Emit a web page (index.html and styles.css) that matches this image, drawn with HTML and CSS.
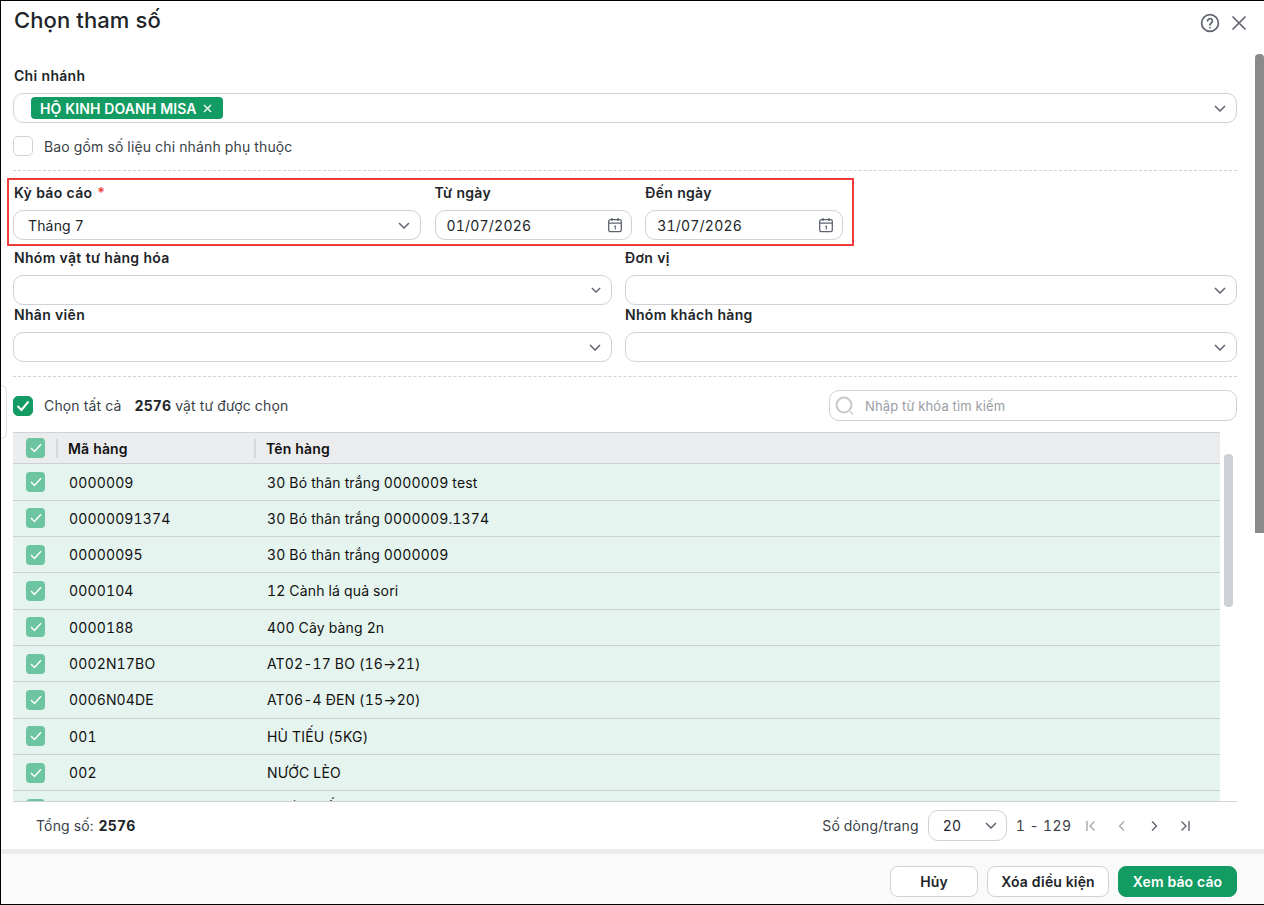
FILE: index.html
```html
<!DOCTYPE html>
<html lang="vi">

<head>
    <meta charset="UTF-8">
    <meta name="viewport" content="width=device-width, initial-scale=1.0">
    <title>Chọn tham số</title>

    <link rel="stylesheet" href="styles.css">
</head>

<body>

    <div class="dialog">
        <span class="side-tab"></span>
        <span class="page-scroll"></span>

        <div class="head">
            <h1 class="title">Chọn tham số</h1>
            <div class="head-icons">
                <svg width="20" height="20" viewBox="0 0 20 20" fill="none" stroke="#5f6470" stroke-width="1.7" stroke-linecap="round">
                    <circle cx="10" cy="10" r="8.4" />
                    <path d="M7.6 8a2.4 2.4 0 1 1 3.7 2c-.9.6-1.3 1-1.3 2" />
                    <path d="M10 14.6v.1" />
                </svg>
                <svg width="16" height="16" viewBox="0 0 16 16" fill="none" stroke="#5f6470" stroke-width="1.7" stroke-linecap="round">
                    <path d="M2 2l12 12M14 2L2 14" />
                </svg>
            </div>
        </div>

        <div class="form">
            <div class="label first-label branch-label">Chi nhánh</div>
            <div class="field tag-field">
                <span class="tag">HỘ KINH DOANH MISA
                    <svg width="9" height="9" viewBox="0 0 9 9" fill="none" stroke="#fff" stroke-width="1.3"><path d="M1 1l7 7M8 1L1 8" /></svg>
                </span>
                <svg class="chev" width="12" height="7" viewBox="0 0 12 7" fill="none" stroke="#5f6470" stroke-width="1.5"><path d="M1 1l5 5 5-5" /></svg>
            </div>

            <label class="check-row dep-row">
                <span class="box"></span>
                <span>Bao gồm số liệu chi nhánh phụ thuộc</span>
            </label>

            <div class="dash first-dash"></div>

            <div class="period">
                <div class="col-period">
                    <div class="label first-label">Kỳ báo cáo <span class="req">*</span></div>
                    <div class="field">
                        <span class="val val-period">Tháng 7</span>
                        <svg class="chev" width="12" height="7" viewBox="0 0 12 7" fill="none" stroke="#5f6470" stroke-width="1.5"><path d="M1 1l5 5 5-5" /></svg>
                    </div>
                </div>
                <div class="col-date">
                    <div class="label">Từ ngày</div>
                    <div class="field">
                        <span class="val date">01/07/2026</span>
                        <svg class="cal" width="16" height="16" viewBox="0 0 16 16" fill="none" stroke="#5f6470" stroke-width="1.3"><rect x="1.7" y="2.7" width="12.6" height="12" rx="1.6" /><path d="M1.7 6.2h12.6M5 1v3M11 1v3" /><path d="M7.3 9.4L8.3 9v3.4" stroke-width="1.1" /></svg>
                    </div>
                </div>
                <div class="col-date">
                    <div class="label">Đến ngày</div>
                    <div class="field">
                        <span class="val date">31/07/2026</span>
                        <svg class="cal" width="16" height="16" viewBox="0 0 16 16" fill="none" stroke="#5f6470" stroke-width="1.3"><rect x="1.7" y="2.7" width="12.6" height="12" rx="1.6" /><path d="M1.7 6.2h12.6M5 1v3M11 1v3" /><path d="M7.3 9.4L8.3 9v3.4" stroke-width="1.1" /></svg>
                    </div>
                </div>
            </div>

            <div class="two-cols">
                <div>
                    <div class="label first-label">Nhóm vật tư hàng hóa</div>
                    <div class="field"><svg class="chev" width="10" height="6" viewBox="0 0 12 7" fill="none" stroke="#5f6470" stroke-width="1.6"><path d="M1 1l5 5 5-5" /></svg></div>
                </div>
                <div>
                    <div class="label">Đơn vị</div>
                    <div class="field"><svg class="chev" width="12" height="7" viewBox="0 0 12 7" fill="none" stroke="#5f6470" stroke-width="1.5"><path d="M1 1l5 5 5-5" /></svg></div>
                </div>
                <div>
                    <div class="label first-label">Nhân viên</div>
                    <div class="field"><svg class="chev" width="12" height="7" viewBox="0 0 12 7" fill="none" stroke="#5f6470" stroke-width="1.5"><path d="M1 1l5 5 5-5" /></svg></div>
                </div>
                <div>
                    <div class="label">Nhóm khách hàng</div>
                    <div class="field"><svg class="chev" width="12" height="7" viewBox="0 0 12 7" fill="none" stroke="#5f6470" stroke-width="1.5"><path d="M1 1l5 5 5-5" /></svg></div>
                </div>
            </div>

            <div class="dash second-dash"></div>

            <div class="select-bar">
                <label class="check-row">
                    <span class="box on"><svg width="14" height="12" viewBox="0 0 14 12" fill="none" stroke="#fff" stroke-width="2"><path d="M1.5 6l4 4 7-8.5" /></svg></span>
                    <span>Chọn tất cả</span>
                </label>
                <div class="picked"><b>2576</b> vật tư được chọn</div>
                <div class="search">
                    <svg width="20" height="20" viewBox="0 0 20 20" fill="none" stroke="#c9c9c9" stroke-width="2"><circle cx="9" cy="9" r="7.4" /><path d="M15 15.5l3 3" stroke-width="1.2" /></svg>
                    <span>Nhập từ khóa tìm kiếm</span>
                </div>
            </div>

            <div class="table-wrap">
                <div class="table">
                    <div class="row thead">
                        <span class="cell-check"><span class="mini"><svg width="12" height="10" viewBox="0 0 12 10" fill="none" stroke="#fff" stroke-width="1.5"><path d="M1 5l3.5 3.5L11 1.2" /></svg></span></span>
                        <span class="cell-code">Mã hàng</span>
                        <span class="cell-name">Tên hàng</span>
                    </div>
                    <div class="row">
                        <span class="cell-check"><span class="mini"><svg width="12" height="10" viewBox="0 0 12 10" fill="none" stroke="#fff" stroke-width="1.5"><path d="M1 5l3.5 3.5L11 1.2" /></svg></span></span>
                        <span class="cell-code">0000009</span>
                        <span class="cell-name">30 Bó thân trắng 0000009 test</span>
                    </div>
                    <div class="row">
                        <span class="cell-check"><span class="mini"><svg width="12" height="10" viewBox="0 0 12 10" fill="none" stroke="#fff" stroke-width="1.5"><path d="M1 5l3.5 3.5L11 1.2" /></svg></span></span>
                        <span class="cell-code">00000091374</span>
                        <span class="cell-name">30 Bó thân trắng 0000009.1374</span>
                    </div>
                    <div class="row">
                        <span class="cell-check"><span class="mini"><svg width="12" height="10" viewBox="0 0 12 10" fill="none" stroke="#fff" stroke-width="1.5"><path d="M1 5l3.5 3.5L11 1.2" /></svg></span></span>
                        <span class="cell-code">00000095</span>
                        <span class="cell-name">30 Bó thân trắng 0000009</span>
                    </div>
                    <div class="row">
                        <span class="cell-check"><span class="mini"><svg width="12" height="10" viewBox="0 0 12 10" fill="none" stroke="#fff" stroke-width="1.5"><path d="M1 5l3.5 3.5L11 1.2" /></svg></span></span>
                        <span class="cell-code">0000104</span>
                        <span class="cell-name">12 Cành lá quả sori</span>
                    </div>
                    <div class="row">
                        <span class="cell-check"><span class="mini"><svg width="12" height="10" viewBox="0 0 12 10" fill="none" stroke="#fff" stroke-width="1.5"><path d="M1 5l3.5 3.5L11 1.2" /></svg></span></span>
                        <span class="cell-code">0000188</span>
                        <span class="cell-name">400 Cây bàng 2n</span>
                    </div>
                    <div class="row">
                        <span class="cell-check"><span class="mini"><svg width="12" height="10" viewBox="0 0 12 10" fill="none" stroke="#fff" stroke-width="1.5"><path d="M1 5l3.5 3.5L11 1.2" /></svg></span></span>
                        <span class="cell-code">0002N17BO</span>
                        <span class="cell-name">AT02-17 BO (16→21)</span>
                    </div>
                    <div class="row">
                        <span class="cell-check"><span class="mini"><svg width="12" height="10" viewBox="0 0 12 10" fill="none" stroke="#fff" stroke-width="1.5"><path d="M1 5l3.5 3.5L11 1.2" /></svg></span></span>
                        <span class="cell-code">0006N04DE</span>
                        <span class="cell-name">AT06-4 ĐEN (15→20)</span>
                    </div>
                    <div class="row">
                        <span class="cell-check"><span class="mini"><svg width="12" height="10" viewBox="0 0 12 10" fill="none" stroke="#fff" stroke-width="1.5"><path d="M1 5l3.5 3.5L11 1.2" /></svg></span></span>
                        <span class="cell-code">001</span>
                        <span class="cell-name">HÙ TIẾU (5KG)</span>
                    </div>
                    <div class="row">
                        <span class="cell-check"><span class="mini"><svg width="12" height="10" viewBox="0 0 12 10" fill="none" stroke="#fff" stroke-width="1.5"><path d="M1 5l3.5 3.5L11 1.2" /></svg></span></span>
                        <span class="cell-code">002</span>
                        <span class="cell-name">NƯỚC LÈO</span>
                    </div>
                    <div class="row">
                        <span class="cell-check"><span class="mini"><svg width="12" height="10" viewBox="0 0 12 10" fill="none" stroke="#fff" stroke-width="1.5"><path d="M1 5l3.5 3.5L11 1.2" /></svg></span></span>
                        <span class="cell-code">003</span>
                        <span class="cell-name">NƯỚC TIẾT</span>
                    </div>
                </div>
                <span class="table-scroll"></span>
            </div>

            <div class="pager">
                <div>Tổng số: <b>2576</b></div>
                <div class="pager-right">
                    <span>Số dòng/trang</span>
                    <span class="size-select">20
                        <svg width="12" height="7" viewBox="0 0 12 7" fill="none" stroke="#5f6470" stroke-width="1.5"><path d="M1 1l5 5 5-5" /></svg>
                    </span>
                    <span class="range">1 - 129</span>
                    <span class="pages">
                        <svg width="12" height="12" viewBox="0 0 12 12" fill="none" stroke="#a5a8b0" stroke-width="1.4"><path d="M2 1v10M9.5 1.5L5 6l4.5 4.5" /></svg>
                        <svg width="12" height="12" viewBox="0 0 12 12" fill="none" stroke="#a5a8b0" stroke-width="1.4"><path d="M8 1.5L3.5 6 8 10.5" /></svg>
                        <svg width="12" height="12" viewBox="0 0 12 12" fill="none" stroke="#5f6470" stroke-width="1.4"><path d="M4 1.5L8.500 6 4 10.5" /></svg>
                        <svg width="12" height="12" viewBox="0 0 12 12" fill="none" stroke="#5f6470" stroke-width="1.4"><path d="M10 1v10M2.500 1.500L7 6l-4.500 4.500" /></svg>
                    </span>
                </div>
            </div>
        </div>

        <div class="foot">
            <button class="btn btn-cancel">Hủy</button>
            <button class="btn btn-clear">Xóa điều kiện</button>
            <button class="btn btn-main">Xem báo cáo</button>
        </div>
    </div>

</body>

</html>
```

FILE: styles.css
```css
* {
    box-sizing: border-box;
}

body {
    margin: 0;
    font-family: Inter, "Noto Sans", sans-serif;
    font-size: 14px;
    letter-spacing: 0.15px;
    font-variant-numeric: tabular-nums;
    color: #212529;
    background: #fff;
}

.dialog {
    position: relative;
    width: 1264px;
    height: 905px;
    border: 1px solid #000;
    border-right: 0;
    background: #fff;
    overflow: hidden;
    display: flex;
    flex-direction: column;
}

.side-tab {
    position: absolute;
    left: -1px;
    top: 384px;
    width: 7px;
    height: 54px;
    border: 1px solid #dcdde1;
    border-left: 0;
    border-radius: 0 6px 6px 0;
}

.page-scroll {
    position: absolute;
    right: 0;
    top: 53px;
    width: 9px;
    height: 479px;
    background: #8a8a8a;
    border-radius: 4px 4px 0 0;
}

.head {
    height: 39px;
    padding: 5px 17px 0 13px;
    display: flex;
    justify-content: space-between;
}

.title {
    margin: 0;
    font-size: 22px;
    line-height: 28px;
    font-weight: 500;
    letter-spacing: 0.1px;
}

.head-icons {
    display: flex;
    align-items: center;
    gap: 11px;
    height: 32px;
    margin-top: 1px;
}

.form {
    flex: 1;
    padding: 0 27px 0 12px;
}

.label {
    font-weight: 600;
    font-size: 14px;
    line-height: 20px;
    height: 20px;
    letter-spacing: 0.3px;
}

.first-label {
    padding-left: 1px;
}

.branch-label {
    margin-top: 27px;
}

.req {
    color: #ef3d3d;
}

.field {
    height: 30px;
    border: 1px solid #d0d2d8;
    border-radius: 10px;
    display: flex;
    align-items: center;
    justify-content: space-between;
    background: #fff;
    margin-top: 7px;
}

.chev {
    margin-left: auto;
    margin-right: 10px;
}

.tag-field {
    margin-top: 7px;
    padding-left: 17px;
}

.tag {
    display: inline-flex;
    align-items: center;
    gap: 6px;
    height: 22px;
    padding: 0 11px 0 9px;
    border-radius: 4px;
    background: #129b62;
    color: #fff;
    font-weight: 600;
    font-size: 14px;
    letter-spacing: 0.1px;
}

.check-row {
    display: flex;
    align-items: center;
    gap: 11px;
    color: #3a3f47;
}

.dep-row {
    margin-top: 13px;
}

.box {
    width: 20px;
    height: 20px;
    border: 1px solid #d0d2d8;
    border-radius: 5px;
    display: flex;
    align-items: center;
    justify-content: center;
}

.box.on {
    background: #129b62;
    border-color: #129b62;
}

.dash {
    border-top: 1px dashed #d0d2d8;
}

.first-dash {
    margin-top: 14px;
}

.period {
    display: flex;
    gap: 13px;
    width: 847px;
    height: 68px;
    margin: 7px 0 0 -6px;
    padding: 3px 9px 0 4px;
    border: 2px solid #ef3d3d;
}

.col-period {
    width: 408px;
    margin-right: 1px;
}

.col-date {
    width: 198px;
}

.period .field {
    margin-top: 7px;
}

.val {
    padding-left: 14px;
}

.val-period {
    font-size: 14px;
}

.date {
    padding-left: 11px;
    letter-spacing: 0.2px;
}

.cal {
    margin-right: 8px;
}

.two-cols {
    display: grid;
    grid-template-columns: 599px 612px;
    column-gap: 13px;
    margin-top: 2px;
}

.second-dash {
    margin-top: 14px;
}

.select-bar {
    display: flex;
    align-items: center;
    height: 31px;
    margin-top: 13px;
}

.picked {
    margin-left: 13px;
    color: #3a3f47;
}

.picked b {
    color: #212529;
    font-weight: 700;
}

.search {
    margin-left: auto;
    width: 408px;
    height: 31px;
    border: 1px solid #d0d2d8;
    border-radius: 10px;
    display: flex;
    align-items: center;
    gap: 10px;
    padding-left: 5px;
    color: #9a9da4;
    font-size: 13px;
}

.table-wrap {
    display: flex;
    height: 370px;
    margin-top: 11px;
    border-bottom: 1px solid #d0d2d8;
    overflow: hidden;
    position: relative;
}

.table {
    width: 1207px;
}

.table-scroll {
    position: absolute;
    left: 1211px;
    top: 22px;
    width: 9px;
    height: 153px;
    background: #cdd0d5;
    border-radius: 4px;
}

.row {
    display: flex;
    align-items: center;
    height: 36.33px;
    background: #e5f4ef;
    border-bottom: 1px solid #ccd0d6;
    color: #111;
}

.thead {
    height: 32.2px;
    background: #ebecee;
    border-top: 1px solid #d0d2d8;
    font-weight: 600;
}

.cell-check {
    width: 43px;
    padding-left: 13px;
    display: flex;
}

.mini {
    width: 19px;
    height: 20px;
    border-radius: 4px;
    background: #6cc4a1;
    display: flex;
    align-items: center;
    justify-content: center;
}

.cell-code {
    width: 198px;
    padding-left: 13px;
}

.cell-name {
    flex: 1;
    padding-left: 13px;
}

.thead .cell-code,
.thead .cell-name {
    border-left: 2px solid #d5d7db;
    line-height: 19px;
    padding-left: 10px;
}

.pager {
    height: 47px;
    display: flex;
    align-items: center;
    justify-content: space-between;
    padding: 0 46px 0 23px;
    color: #3a3f47;
}

.pager b {
    color: #212529;
    margin-left: 1px;
}

.pager-right {
    display: flex;
    align-items: center;
}

.size-select {
    width: 79px;
    height: 31px;
    margin-left: 9px;
    border: 1px solid #d0d2d8;
    border-radius: 10px;
    display: flex;
    align-items: center;
    justify-content: space-between;
    padding: 0 9px 0 14px;
    color: #212529;
}

.range {
    margin-left: 9px;
    letter-spacing: 0.4px;
}

.pages {
    display: flex;
    gap: 19.500px;
    margin-left: 13px;
}

.foot {
    height: 56px;
    border-top: 5px solid #ececec;
    background: #fafafa;
    display: flex;
    align-items: center;
    justify-content: flex-end;
    gap: 9px;
    padding: 4px 27px 0 0;
}

.btn {
    height: 31px;
    border: 1px solid #d0d2d8;
    border-radius: 8px;
    background: #fff;
    color: #212529;
    font-family: inherit;
    font-size: 14px;
    font-weight: 600;
    letter-spacing: 0.15px;
}

.btn-cancel {
    width: 88px;
}

.btn-clear {
    width: 122px;
}

.btn-main {
    width: 119px;
    background: #129b62;
    border-color: #129b62;
    color: #fff;
}
```
